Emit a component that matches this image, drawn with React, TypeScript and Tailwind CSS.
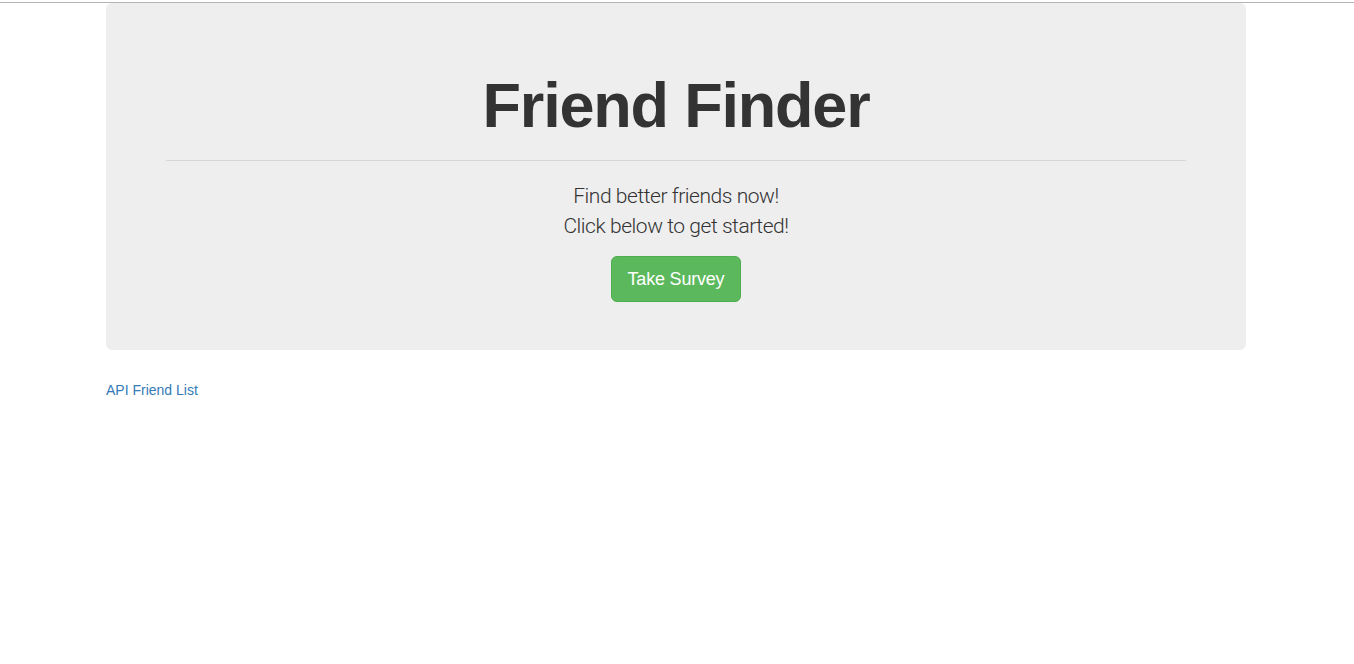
export default function App() {
  return (
    <div className="min-h-[664px] bg-white text-[#333] font-['Liberation_Sans',Arial,sans-serif] text-[14px] leading-[20px]">
      <div className="h-[3px] border-b border-[#b4b4b4]" />
      <div className="pr-[2px]">
        <div className="mx-auto w-[1170px] px-[15px]">
          <div className="rounded-[6px] bg-[#eee] px-[60px] pt-[48px] pb-[48px] mb-[30px] text-center">
            <h1 className="mt-[20px] mb-[10px] text-[63px] leading-[69px] font-bold tracking-[-1.2px] text-[#333]">
              Friend Finder
            </h1>
            <hr className="mt-[20px] mb-[20px] border-0 border-t border-[#d6d6d6]" />
            <p className="mb-[15px] text-[21px] leading-[30px] font-light tracking-[-0.45px] font-['Roboto',sans-serif] text-[#333]">
              Find better friends now!
              <br />
              Click below to get started!
            </p>
            <button className="rounded-[6px] border border-[#4cae4c] bg-[#5cb85c] px-[16px] py-[10px] text-[18px] leading-[24px] tracking-[-0.2px] text-white">
              Take Survey
            </button>
          </div>
          <a href="#" className="text-[#337ab7]">
            API Friend List
          </a>
        </div>
      </div>
    </div>
  );
}
